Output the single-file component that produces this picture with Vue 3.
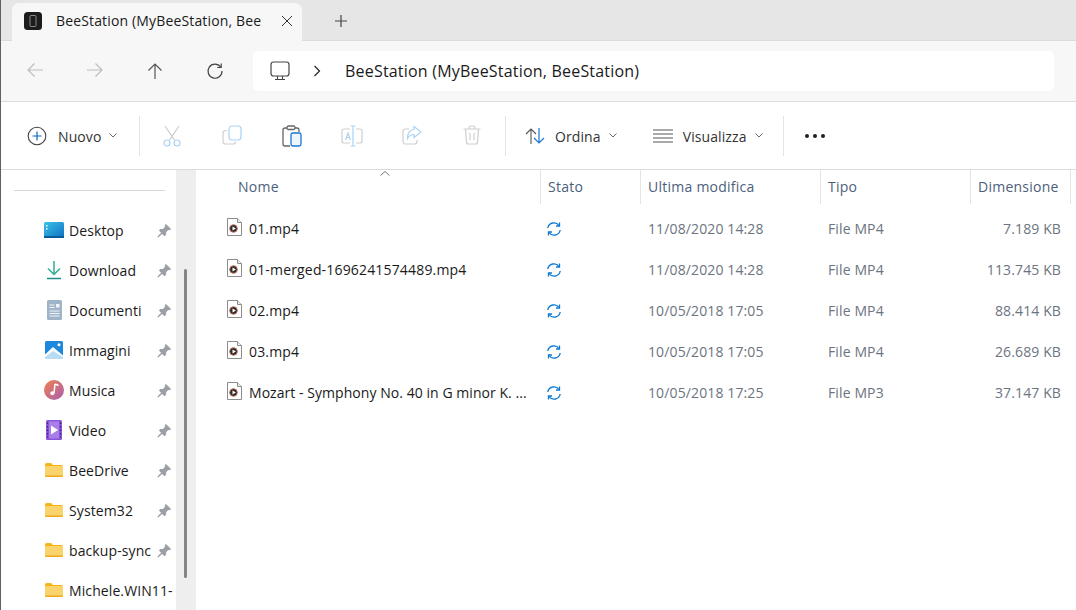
<template>
  <div class="explorer">
    <div class="tabstrip">
      <div class="tab">
        <span class="tab-icon"><svg width="18" height="18" viewBox="0 0 18 18"><rect width="18" height="18" rx="3.5" fill="#1c1c1c"/><rect x="6" y="3.5" width="6" height="11" rx="1" fill="none" stroke="#8a8a8a" stroke-width="1"/></svg></span>
        <span class="tab-title">BeeStation (MyBeeStation, BeeStation)</span>
        <svg class="tab-close" width="12" height="12" viewBox="0 0 12 12"><path d="M1 1l10 10M11 1L1 11" stroke="#333" stroke-width="1" fill="none"/></svg>
      </div>
      <svg class="tab-add" width="14" height="14" viewBox="0 0 14 14"><path d="M7 1v12M1 7h12" stroke="#444" stroke-width="1.2" fill="none"/></svg>
    </div>

    <div class="navbar">
      <div class="nav-btns">
        <span class="nav-btn"><svg width="18" height="16" viewBox="0 0 18 16"><path d="M17 8H2M8.5 1.5L2 8l6.5 6.5" stroke="#bdbdbd" stroke-width="1.2" fill="none"/></svg></span>
        <span class="nav-btn"><svg width="18" height="16" viewBox="0 0 18 16"><path d="M1 8h15M9.5 1.5L16 8l-6.5 6.5" stroke="#bdbdbd" stroke-width="1.2" fill="none"/></svg></span>
        <span class="nav-btn"><svg width="16" height="18" viewBox="0 0 16 18"><path d="M8 17V2M1.5 8.5L8 2l6.5 6.5" stroke="#555" stroke-width="1.2" fill="none"/></svg></span>
        <span class="nav-btn"><svg width="18" height="18" viewBox="0 0 18 18"><path d="M14.6 5A7 7 0 1 0 16 9" stroke="#444" stroke-width="1.2" fill="none"/><path d="M15.2 1.5V5.5H11.2" stroke="#444" stroke-width="1.2" fill="none"/></svg></span>
      </div>
      <div class="address">
        <svg width="20" height="20" viewBox="0 0 20 20"><rect x="1" y="1" width="18" height="14" rx="2.5" fill="none" stroke="#444" stroke-width="1.2"/><path d="M7.5 15v3M12.5 15v3M5 18.5h10" stroke="#444" stroke-width="1.1" fill="none"/></svg>
        <svg class="crumb" width="8" height="12" viewBox="0 0 8 12"><path d="M1.5 1l5 5-5 5" stroke="#222" stroke-width="1.2" fill="none"/></svg>
        <span class="address-text">BeeStation (MyBeeStation, BeeStation)</span>
      </div>
    </div>

    <div class="toolbar">
      <div class="tool-text nuovo">
        <svg width="20" height="20" viewBox="0 0 20 20"><circle cx="10" cy="10" r="8.8" fill="none" stroke="#444" stroke-width="1.1"/><path d="M10 5.5v9M5.5 10h9" stroke="#0a66c2" stroke-width="1.2"/></svg>
        <span>Nuovo</span>
        <svg class="caret" width="8" height="5" viewBox="0 0 8 5"><path d="M.5.5L4 4 7.5.5" stroke="#666" fill="none"/></svg>
      </div>
      <i class="sep"></i>
      <div class="tool-icons">
        <span class="tool-icon"><svg width="20" height="22" viewBox="0 0 20 22"><path d="M3 1l9.500 14M17 1L7.500 15" stroke="#c8c8c8" stroke-width="1.1" fill="none"/><circle cx="5" cy="18" r="3" fill="none" stroke="#a9d3f5" stroke-width="1.2"/><circle cx="15" cy="18" r="3" fill="none" stroke="#a9d3f5" stroke-width="1.2"/></svg></span>
        <span class="tool-icon"><svg width="20" height="20" viewBox="0 0 20 20"><path d="M5 5.500H3.500A2.500 2.500 0 0 0 1 8v8.500A2.500 2.500 0 0 0 3.500 19H11a2.500 2.500 0 0 0 2.500-2.500" stroke="#cfcfcf" stroke-width="1.2" fill="none"/><rect x="7" y="1" width="12" height="14" rx="3" fill="none" stroke="#a9d3f5" stroke-width="1.2"/></svg></span>
        <span class="tool-icon"><svg width="20" height="22" viewBox="0 0 20 22"><path d="M5 3H3a2 2 0 0 0-2 2v14a2 2 0 0 0 2 2h5M13 3h2a2 2 0 0 1 2 2v2" stroke="#666" stroke-width="1.300" fill="none"/><rect x="5" y="1" width="8" height="3.500" rx="1.500" fill="none" stroke="#666" stroke-width="1.300"/><rect x="9" y="8" width="10" height="13" rx="1.800" fill="#eef5fb" stroke="#1a78d0" stroke-width="1.300"/></svg></span>
        <span class="tool-icon"><svg width="22" height="22" viewBox="0 0 22 22"><path d="M9 4H3a2 2 0 0 0-2 2v10a2 2 0 0 0 2 2h6M15 4h4a2 2 0 0 1 2 2v10a2 2 0 0 1-2 2h-4" stroke="#cfcfcf" stroke-width="1.200" fill="none"/><path d="M12 1v20M9.500 1h5M9.500 21h5" stroke="#a9d3f5" stroke-width="1.200" fill="none"/><path d="M4.500 15l2.500-7 2.500 7M5.400 12.500h3.200" stroke="#a9d3f5" stroke-width="1.100" fill="none"/></svg></span>
        <span class="tool-icon"><svg width="20" height="20" viewBox="0 0 20 20"><path d="M7 4H3.500A2.500 2.500 0 0 0 1 6.500v10A2.500 2.500 0 0 0 3.500 19h9a2.500 2.500 0 0 0 2.500-2.500V15" stroke="#cfcfcf" stroke-width="1.200" fill="none"/><path d="M12 1.500L19 7l-7 5.500V9.500C9 9.500 7 11 5.500 13.500 5.500 8.500 8 5 12 4.500z" stroke="#a9d3f5" stroke-width="1.200" fill="none"/></svg></span>
        <span class="tool-icon"><svg width="18" height="20" viewBox="0 0 18 20"><path d="M.5 4h17M6 4V2.500A1.500 1.500 0 0 1 7.500 1h3A1.500 1.500 0 0 1 12 2.500V4M2.500 4l1 13a2 2 0 0 0 2 2h7a2 2 0 0 0 2-2l1-13M7 8v7M11 8v7" stroke="#cfcfcf" stroke-width="1.200" fill="none"/></svg></span>
      </div>
      <i class="sep sep2"></i>
      <div class="tool-text ordina">
        <svg width="20" height="18" viewBox="0 0 20 18"><path d="M6 17V2M1 7l5-5 5 5" stroke="#555" stroke-width="1.100" fill="none"/><path d="M14 1v15M9 11l5 5 5-5" stroke="#1a78d0" stroke-width="1.200" fill="none"/></svg>
        <span>Ordina</span>
        <svg class="caret" width="8" height="5" viewBox="0 0 8 5"><path d="M.5.5L4 4 7.500.5" stroke="#666" fill="none"/></svg>
      </div>
      <div class="tool-text visualizza">
        <svg width="20" height="14" viewBox="0 0 20 14"><path d="M0 1h20M0 5h20M0 9h20M0 13h20" stroke="#555" stroke-width="1"/></svg>
        <span>Visualizza</span>
        <svg class="caret" width="8" height="5" viewBox="0 0 8 5"><path d="M.5.500L4 4 7.500.500" stroke="#666" fill="none"/></svg>
      </div>
      <i class="sep sep3"></i>
      <div class="more"><b></b><b></b><b></b></div>
    </div>

    <div class="content">
      <aside class="sidebar">
        <div class="side-list">
          <div class="side-rule"></div>
          <div v-for="item in places" :key="item.name" class="side-item">
            <span class="side-icon">
              <svg v-if="item.kind === 'desktop'" width="20" height="16" viewBox="0 0 20 16"><defs><linearGradient id="dk" x1="0" y1="0" x2="1" y2="1"><stop offset="0" stop-color="#3cc4ea"/><stop offset="1" stop-color="#0f6fc0"/></linearGradient></defs><rect width="20" height="16" rx="1.500" fill="url(#dk)"/><path d="M0 14h20v2H0z" fill="#0a5a9c"/><rect x="2" y="3" width="1.500" height="1.500" fill="#fff"/><rect x="2" y="6" width="1.500" height="1.500" fill="#fff"/></svg>
              <svg v-else-if="item.kind === 'download'" width="16" height="20" viewBox="0 0 16 20"><path d="M8 1v13M2 8.500l6 6 6-6" stroke="#2fae92" stroke-width="1.500" fill="none"/><path d="M1 18.500h14" stroke="#1f8f86" stroke-width="1.500"/></svg>
              <svg v-else-if="item.kind === 'docs'" width="15" height="20" viewBox="0 0 15 20"><rect width="15" height="20" rx="1.500" fill="#9fb4c9"/><path d="M2.500 5h5M2.500 7.500h5M2.500 11h10M2.500 13.500h10M2.500 16h10" stroke="#f1f5f9" stroke-width="1"/><rect x="9" y="4" width="3.500" height="3.500" fill="#f1f5f9"/></svg>
              <svg v-else-if="item.kind === 'pics'" width="18" height="18" viewBox="0 0 18 18"><rect width="18" height="18" rx="1.500" fill="#1e88dc"/><path d="M0 18v-4.500L8 6l10 8.500V18z" fill="#fff"/><path d="M0 18v-2l8-6 10 6v2z" fill="#b9dcf6"/><circle cx="14" cy="3.800" r="1.500" fill="#fff"/></svg>
              <svg v-else-if="item.kind === 'music'" width="20" height="20" viewBox="0 0 20 20"><defs><linearGradient id="ms" x1="0" y1="0" x2="1" y2="1"><stop offset="0" stop-color="#f0804f"/><stop offset="1" stop-color="#a860b0"/></linearGradient></defs><circle cx="10" cy="10" r="10" fill="url(#ms)"/><path d="M11 4l-1 9" stroke="#fff" stroke-width="1.500"/><path d="M11 4l3.500 1.500" stroke="#fff" stroke-width="1.500"/><circle cx="8.300" cy="13.300" r="2" fill="#fff"/></svg>
              <svg v-else-if="item.kind === 'video'" width="16" height="20" viewBox="0 0 16 20"><rect width="16" height="20" rx="1.500" fill="#8a55d8"/><rect x="3" y="1.500" width="10" height="17" fill="#a87fe8"/><path d="M5 5.500l7 4.500-7 4.500z" fill="#fff"/><path d="M1.500 2.500v15M14.500 2.500v15" stroke="#3a2080" stroke-width="1.200" stroke-dasharray="1.500 2"/></svg>
              <svg v-else width="18" height="14" viewBox="0 0 18 14"><path d="M0 1.500A1.500 1.500 0 0 1 1.500 0H6l2 2h8.500A1.500 1.500 0 0 1 18 3.500V4H0z" fill="#f5b21a"/><path d="M0 3h18v9.500a1.500 1.500 0 0 1-1.500 1.500h-15A1.500 1.500 0 0 1 0 12.500z" fill="#f9d36b"/><path d="M0 12.500h18a1.500 1.500 0 0 1-1.500 1.500h-15A1.500 1.500 0 0 1 0 12.500z" fill="#eea91b"/></svg>
            </span>
            <span class="side-name">{{ item.name }}</span>
            <svg v-if="item.pinned" class="pin" width="15" height="15" viewBox="0 0 16 16"><path d="M9.500 1L15 6.500 13.500 7.800 12 7.400 9.700 9.700 9.700 12.500 8 14 2 8 3.500 6.300 6.300 6.300 8.600 4 8.200 2.500z" fill="#9aa0a6"/><path d="M5.500 10.500L1 15" stroke="#9aa0a6" stroke-width="1.600"/></svg>
          </div>
        </div>
        <div class="side-scroll"><div class="side-thumb"></div></div>
      </aside>

      <main class="files">
        <div class="file-head">
          <div class="head-cell name-col">Nome
            <svg class="sort" width="10" height="5" viewBox="0 0 10 5"><path d="M.5 4.500L5 .500l4.500 4" stroke="#777" fill="none"/></svg>
          </div>
          <div class="head-cell">Stato</div>
          <div class="head-cell">Ultima modifica</div>
          <div class="head-cell">Tipo</div>
          <div class="head-cell">Dimensione</div>
        </div>
        <div v-for="file in files" :key="file.name" class="file-row">
          <div class="file-name">
            <svg width="15" height="18" viewBox="0 0 15 18"><path d="M.500.500h10l4 4v13H.500z" fill="#fff" stroke="#8c8c8c"/><path d="M10.500.500v4h4" fill="#eee" stroke="#8c8c8c"/><circle cx="6.500" cy="10.500" r="3.800" fill="#2b2b2b" stroke="#c0705a"/><path d="M5.500 8.500l3.400 2-3.400 2z" fill="#fff"/></svg>
            <span class="file-label" :class="{ tight: file.tight }">{{ file.name }}</span>
          </div>
          <div class="file-state">
            <svg width="14" height="14" viewBox="0 0 14 14"><path d="M.800 6A6.200 6.200 0 0 1 12 3.500M13.200 8A6.200 6.200 0 0 1 2 10.500" stroke="#0a78d4" stroke-width="1.300" fill="none"/><path d="M12.500.500V4H9M1.500 13.500V10H5" stroke="#0a78d4" stroke-width="1.300" fill="none"/></svg>
          </div>
          <div class="file-muted">{{ file.date }}</div>
          <div class="file-muted">{{ file.type }}</div>
          <div class="file-muted file-size">{{ file.size }}</div>
        </div>
      </main>
    </div>
  </div>
</template>

<script setup>
const places = [
  { name: 'Desktop', kind: 'desktop', pinned: true },
  { name: 'Download', kind: 'download', pinned: true },
  { name: 'Documenti', kind: 'docs', pinned: true },
  { name: 'Immagini', kind: 'pics', pinned: true },
  { name: 'Musica', kind: 'music', pinned: true },
  { name: 'Video', kind: 'video', pinned: true },
  { name: 'BeeDrive', kind: 'folder', pinned: true },
  { name: 'System32', kind: 'folder', pinned: true },
  { name: 'backup-sync', kind: 'folder', pinned: true },
  { name: 'Michele.WIN11-', kind: 'folder', pinned: false },
];

const files = [
  { name: '01.mp4', date: '11/08/2020 14:28', type: 'File MP4', size: '7.189 KB' },
  { name: '01-merged-1696241574489.mp4', date: '11/08/2020 14:28', type: 'File MP4', size: '113.745 KB' },
  { name: '02.mp4', date: '10/05/2018 17:05', type: 'File MP4', size: '88.414 KB' },
  { name: '03.mp4', date: '10/05/2018 17:05', type: 'File MP4', size: '26.689 KB' },
  { name: 'Mozart - Symphony No. 40 in G minor K. ...', date: '10/05/2018 17:25', type: 'File MP3', size: '37.147 KB', tight: true },
];
</script>

<style>
body {
  margin: 0;
  overflow: hidden;
  background: #fff;
}
</style>

<style scoped>
.explorer {
  width: 1076px;
  height: 610px;
  box-sizing: border-box;
  border-left: 1px solid #5a6468;
  display: flex;
  flex-direction: column;
  overflow: hidden;
  font-family: "Open Sans", "Noto Sans", sans-serif;
  font-size: 14px;
  color: #1a1a1a;
  background: #fff;
}
.tabstrip {
  height: 41px;
  flex: none;
  box-sizing: border-box;
  background: #e6e6e6;
  border-bottom: 1px solid #dcdcdc;
  padding: 3px 0 0 11px;
  display: flex;
  align-items: center;
}
.tab {
  width: 290px;
  height: 39px;
  margin-bottom: -1px;
  box-sizing: border-box;
  background: #f7f7f7;
  border-radius: 7px 7px 0 0;
  padding: 0 0 3px 12px;
  display: flex;
  align-items: center;
}
.tab-icon {
  display: flex;
  width: 18px;
}
.tab-title {
  margin-left: 14px;
  width: 206px;
  overflow: hidden;
  white-space: nowrap;
  font-size: 14px;
  letter-spacing: 0.15px;
}
.tab-close {
  margin-left: 19px;
}
.tab-add {
  margin-left: 32px;
  margin-bottom: 1px;
}
.navbar {
  height: 60px;
  flex: none;
  box-sizing: border-box;
  background: #f7f7f7;
  display: flex;
  align-items: center;
  padding-left: 4px;
}
.nav-btns {
  display: flex;
}
.nav-btn {
  width: 60px;
  display: flex;
  justify-content: center;
}
.address {
  width: 801px;
  height: 40px;
  margin-left: 8px;
  box-sizing: border-box;
  background: #fff;
  border-radius: 5px;
  display: flex;
  align-items: center;
  padding-left: 17px;
}
.crumb {
  margin-left: 23px;
}
.address-text {
  margin-left: 24px;
  font-size: 16px;
  letter-spacing: 0.2px;
  white-space: nowrap;
}
.toolbar {
  height: 69px;
  flex: none;
  box-sizing: border-box;
  border-top: 1px solid #dcdcdc;
  border-bottom: 1px solid #dcdcdc;
  display: flex;
  align-items: center;
  padding-left: 26px;
}
.tool-text {
  display: flex;
  align-items: center;
  white-space: nowrap;
  letter-spacing: 0.1px;
  color: #333;
}
.tool-text span {
  padding-top: 1px;
}
.nuovo span {
  margin-left: 11px;
}
.caret {
  margin-left: 8px;
}
.nuovo {
  width: 112px;
}
.sep {
  width: 1px;
  height: 40px;
  background: #e4e4e4;
}
.tool-icons {
  display: flex;
  margin-left: 2px;
}
.tool-icon {
  width: 60px;
  display: flex;
  justify-content: center;
}
.sep2 {
  margin-left: 3px;
}
.ordina {
  margin-left: 19px;
}
.ordina span {
  margin-left: 10px;
}
.visualizza {
  margin-left: 36px;
}
.visualizza span {
  margin-left: 10px;
}
.sep3 {
  margin-left: 20px;
}
.more {
  margin-left: 21px;
  display: flex;
  gap: 4px;
}
.more b {
  width: 4px;
  height: 4px;
  border-radius: 50%;
  background: #222;
}
.content {
  flex: 1;
  display: flex;
  min-height: 0;
}
.sidebar {
  width: 195px;
  flex: none;
  display: flex;
}
.side-list {
  width: 175px;
  box-sizing: border-box;
  overflow: hidden;
  padding-top: 20px;
}
.side-rule {
  height: 1px;
  margin: 0 11px 19px 13px;
  background: #d8d8d8;
}
.side-item {
  height: 40px;
  display: flex;
  align-items: center;
  box-sizing: border-box;
  padding: 0 4px 0 43px;
  white-space: nowrap;
}
.side-icon {
  width: 20px;
  flex: none;
  display: flex;
  justify-content: center;
  align-items: center;
}
.side-name {
  margin-left: 5px;
  flex: 1;
  min-width: 0;
  letter-spacing: 0.1px;
}
.pin {
  margin-left: 5px;
  flex: none;
}
.side-scroll {
  width: 20px;
  background: #eeeeee;
  padding-top: 99px;
  box-sizing: border-box;
}
.side-thumb {
  width: 3px;
  height: 309px;
  margin-left: 8px;
  border-radius: 2px;
  background: #858585;
}
.files {
  flex: 1;
  min-width: 0;
  padding-left: 1px;
}
.file-head,
.file-row {
  display: grid;
  grid-template-columns: 344px 100px 180px 150px 100px;
}
.file-head {
  height: 34px;
  margin-bottom: 4px;
}
.head-cell {
  position: relative;
  box-sizing: border-box;
  padding: 7px 0 0 7px;
  border-right: 1px solid #e4e4e4;
  color: #4c607a;
  letter-spacing: 0.25px;
  white-space: nowrap;
}
.name-col {
  padding-left: 41px;
}
.sort {
  position: absolute;
  left: 183px;
  top: 1px;
}
.file-row {
  height: 41px;
  align-items: center;
}
.file-name {
  display: flex;
  align-items: center;
  padding-left: 30px;
  min-width: 0;
}
.file-name svg {
  flex: none;
  margin-top: -3px;
}
.file-label {
  margin-left: 7px;
  white-space: nowrap;
  letter-spacing: 0.17px;
}
.file-label.tight {
  letter-spacing: 0.05px;
}
.file-state {
  display: flex;
  padding-left: 6px;
}
.file-muted {
  padding-left: 7px;
  color: #6c7480;
  letter-spacing: 0.12px;
  white-space: nowrap;
}
.file-size {
  text-align: right;
  padding: 0 10px 0 0;
}
</style>
